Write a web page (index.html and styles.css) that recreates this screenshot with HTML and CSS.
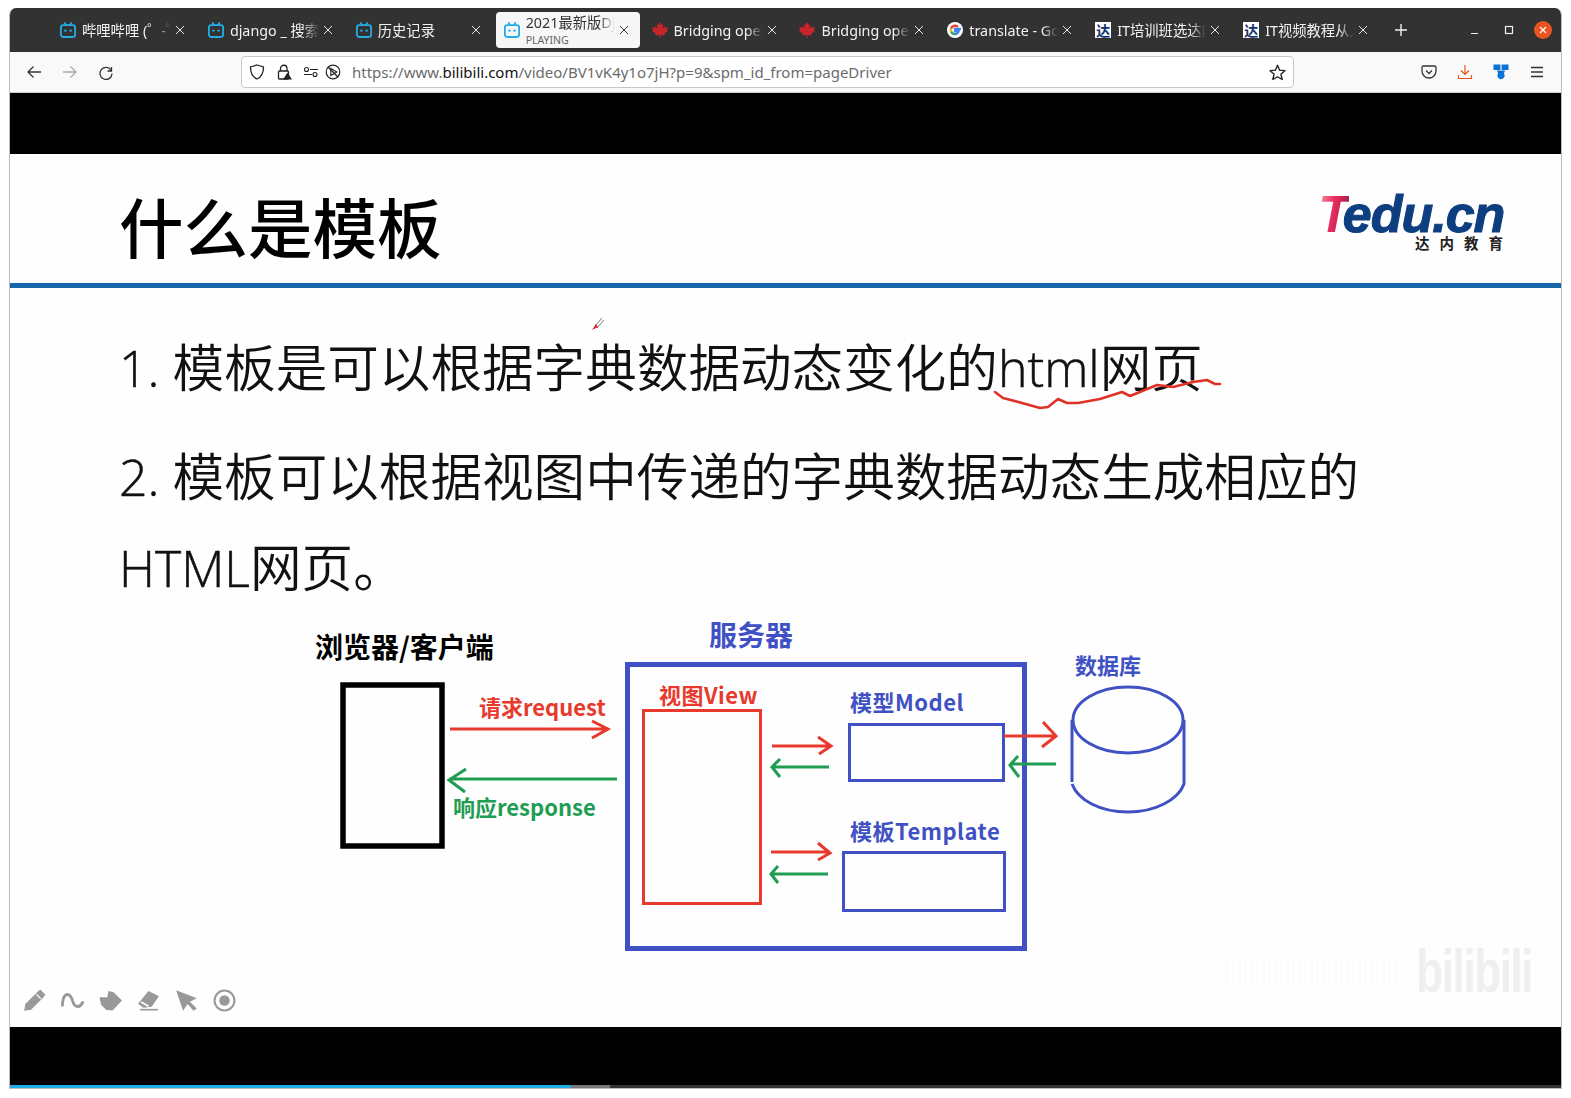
FILE: index.html
```html
<!DOCTYPE html>
<html lang="zh-CN">
<head>
    <meta charset="UTF-8">
    <title>2021最新版Django</title>
    <link rel="stylesheet" href="styles.css">
</head>
<body>
    <svg class="defs" width="0" height="0">
        <symbol id="bili" viewBox="0 0 16 16">
            <path d="M4.5 0.8 L6.5 3.2 M11.5 0.8 L9.5 3.2" stroke="#23ade5" stroke-width="1.6" stroke-linecap="round"/>
            <rect x="0.9" y="3.2" width="14.2" height="11.8" rx="2.4" fill="none" stroke="#23ade5" stroke-width="1.8"/>
            <circle cx="5.4" cy="8.6" r="1.2" fill="#23ade5"/>
            <circle cx="10.6" cy="8.6" r="1.2" fill="#23ade5"/>
        </symbol>
        <symbol id="leaf" viewBox="0 0 16 16">
            <path d="M8 0 L9.6 3 L11.2 2.2 L10.6 6.4 L12.6 4.2 L13.2 5.6 L15.8 5.2 L14.9 8 L16 8.8 L12.2 12 L12.7 13.4 L8.5 12.9 L8.5 16 L7.5 16 L7.5 12.9 L3.3 13.4 L3.8 12 L0 8.8 L1.1 8 L0.2 5.2 L2.8 5.6 L3.4 4.2 L5.4 6.4 L4.8 2.2 L6.4 3 Z" fill="#c8242b"/>
        </symbol>
        <symbol id="tclose" viewBox="0 0 10 10">
            <path d="M1 1 L9 9 M9 1 L1 9" stroke="#e8e8e8" stroke-width="1"/>
        </symbol>
    </svg>

    <div class="window">
        <div class="tabbar">
            <div class="tabs">
                <div class="tab">
                    <svg class="fav"><use href="#bili"/></svg>
                    <span class="tab-label">哔哩哔哩 (゜-゜)つロ 干杯</span>
                    <svg class="tab-x"><use href="#tclose"/></svg>
                </div>
                <div class="tab">
                    <svg class="fav"><use href="#bili"/></svg>
                    <span class="tab-label">django _ 搜索结果</span>
                    <svg class="tab-x"><use href="#tclose"/></svg>
                </div>
                <div class="tab">
                    <svg class="fav"><use href="#bili"/></svg>
                    <span class="tab-label">历史记录</span>
                    <svg class="tab-x"><use href="#tclose"/></svg>
                </div>
                <div class="tab tab-active">
                    <svg class="fav"><use href="#bili"/></svg>
                    <div class="tab-stack">
                        <span class="tab-label">2021最新版Django</span>
                        <span class="tab-sub">PLAYING</span>
                    </div>
                    <svg class="tab-x tab-x-dark" viewBox="0 0 10 10"><path d="M1 1 L9 9 M9 1 L1 9" stroke="#333" stroke-width="1"/></svg>
                </div>
                <div class="tab">
                    <svg class="fav"><use href="#leaf"/></svg>
                    <span class="tab-label">Bridging open source</span>
                    <svg class="tab-x"><use href="#tclose"/></svg>
                </div>
                <div class="tab">
                    <svg class="fav"><use href="#leaf"/></svg>
                    <span class="tab-label">Bridging open source</span>
                    <svg class="tab-x"><use href="#tclose"/></svg>
                </div>
                <div class="tab">
                    <svg class="fav" viewBox="0 0 16 16">
                        <circle cx="8" cy="8" r="8" fill="#fff"/>
                        <path d="M14 7 H8 V9.2 H11.6 C11 11 9.6 12.2 8 12.2" fill="none" stroke="#4285f4" stroke-width="2.4"/>
                        <path d="M8 12.2 C6.2 12.2 4.7 11.1 4 9.4" fill="none" stroke="#34a853" stroke-width="2.4"/>
                        <path d="M4 9.4 C3.7 8.5 3.7 7.5 4 6.6" fill="none" stroke="#fbbc05" stroke-width="2.4"/>
                        <path d="M4 6.6 C4.7 4.9 6.2 3.8 8 3.8 C9.1 3.8 10.1 4.2 10.9 4.9" fill="none" stroke="#ea4335" stroke-width="2.4"/>
                    </svg>
                    <span class="tab-label">translate - Google</span>
                    <svg class="tab-x"><use href="#tclose"/></svg>
                </div>
                <div class="tab">
                    <span class="fav-da">达</span>
                    <span class="tab-label">IT培训班选达内培训</span>
                    <svg class="tab-x"><use href="#tclose"/></svg>
                </div>
                <div class="tab">
                    <span class="fav-da">达</span>
                    <span class="tab-label">IT视频教程从入门到</span>
                    <svg class="tab-x"><use href="#tclose"/></svg>
                </div>
            </div>
            <svg class="newtab" viewBox="0 0 14 14"><path d="M7 1 V13 M1 7 H13" stroke="#f0f0f0" stroke-width="1.4"/></svg>
            <div class="winctl">
                <svg class="winbtn" viewBox="0 0 12 12"><path d="M2 9.5 H9" stroke="#eee" stroke-width="1.2"/></svg>
                <svg class="winbtn" viewBox="0 0 12 12"><rect x="2.5" y="2.5" width="7" height="7" fill="none" stroke="#eee" stroke-width="1.2"/></svg>
                <span class="winclose"><svg viewBox="0 0 10 10"><path d="M2 2 L8 8 M8 2 L2 8" stroke="#fff" stroke-width="1.2"/></svg></span>
            </div>
        </div>

        <div class="navbar">
            <svg class="navicon" viewBox="0 0 16 16"><path d="M15 8 H2 M7.5 2.5 L2 8 L7.5 13.5" fill="none" stroke="#333" stroke-width="1.3"/></svg>
            <svg class="navicon" viewBox="0 0 16 16"><path d="M1 8 H14 M8.5 2.5 L14 8 L8.5 13.5" fill="none" stroke="#aaa" stroke-width="1.3"/></svg>
            <svg class="navicon" viewBox="0 0 16 16"><path d="M13.5 3 V7 H9.5 M13.3 6.6 A6 6 0 1 0 14 9.5" fill="none" stroke="#333" stroke-width="1.3"/></svg>

            <div class="urlbar">
                <svg class="urlicon" viewBox="0 0 16 16"><path d="M8 1 L14.5 3 C14.5 9 13 12.8 8 15 C3 12.8 1.5 9 1.5 3 Z" fill="none" stroke="#222" stroke-width="1.3"/></svg>
                <svg class="urlicon" viewBox="0 0 16 16">
                    <path d="M4.5 7 V4.5 A3.2 3.2 0 0 1 11 4.5 V7" fill="none" stroke="#222" stroke-width="1.3"/>
                    <rect x="2.5" y="7" width="10" height="8" rx="1" fill="none" stroke="#222" stroke-width="1.3"/>
                    <path d="M11.5 8.5 L16 15.5 H7 Z" fill="#222"/>
                </svg>
                <svg class="urlicon urlicon-perm" viewBox="0 0 16 16">
                    <circle cx="3.5" cy="5.5" r="2" fill="none" stroke="#222" stroke-width="1.1"/>
                    <path d="M7 5.5 H15 M1 10.5 H9" stroke="#222" stroke-width="1.1"/>
                    <circle cx="12" cy="10.5" r="2" fill="none" stroke="#222" stroke-width="1.1"/>
                </svg>
                <svg class="urlicon urlicon-play" viewBox="0 0 16 16">
                    <circle cx="8" cy="8" r="6.8" fill="none" stroke="#222" stroke-width="1.2"/>
                    <path d="M5.8 4.5 L11.8 8 L5.8 11.5 Z" fill="none" stroke="#222" stroke-width="1.1"/>
                    <path d="M2.8 2.8 L13.2 13.2" stroke="#222" stroke-width="1.3"/>
                </svg>
                <span class="url">https://www.<b>bilibili.com</b>/video/BV1vK4y1o7jH?p=9&amp;spm_id_from=pageDriver</span>
                <svg class="urlstar" viewBox="0 0 16 16"><path d="M8 1.2 L10 5.8 L15 6.3 L11.2 9.6 L12.4 14.6 L8 12 L3.6 14.6 L4.8 9.6 L1 6.3 L6 5.8 Z" fill="none" stroke="#222" stroke-width="1.3" stroke-linejoin="round"/></svg>
            </div>

            <div class="navright">
                <svg class="navicon" viewBox="0 0 16 16"><path d="M2.5 2 H13.5 A1.5 1.5 0 0 1 15 3.5 V7 A7 7 0 0 1 1 7 V3.5 A1.5 1.5 0 0 1 2.5 2 Z" fill="none" stroke="#333" stroke-width="1.3"/><path d="M5 6.5 L8 9.5 L11 6.5" fill="none" stroke="#333" stroke-width="1.3"/></svg>
                <svg class="navicon" viewBox="0 0 16 16"><path d="M8 1 V10 M4 6.5 L8 10.5 L12 6.5 M1.5 11 V14.5 H14.5 V11" fill="none" stroke="#e8541e" stroke-width="1.2"/></svg>
                <svg class="navicon" viewBox="0 0 16 16"><path d="M0.5 0.5 H7.4 V6 H0.5 Z M8.6 0.5 H15.5 V6 H8.6 Z M4 6.6 H12 L10.9 9.6 A3.5 3.5 0 1 1 5.1 9.6 Z" fill="#0a72d4"/></svg>
                <svg class="navicon" viewBox="0 0 16 16"><path d="M2 3.5 H14 M2 8 H14 M2 12.5 H14" stroke="#333" stroke-width="1.3"/></svg>
            </div>
        </div>

        <div class="letterbox-top"></div>

        <div class="slide">
            <div class="slide-head">
                <h1 class="slide-title">什么是模板</h1>
                <div class="logo">
                    <div class="logo-mark"><span class="logo-t">T</span><span class="logo-edu">edu.cn</span></div>
                    <div class="logo-cn">达内教育</div>
                </div>
            </div>

            <div class="points">
                <p class="point point-first"><span class="num">1. </span>模板是可以根据字典数据动态变化的<span class="num">html</span>网页</p>
                <p class="point point-second"><span class="num">2. </span>模板可以根据视图中传递的字典数据动态生成相应的</p>
                <p class="point point-third"><span class="num">HTML</span>网页。</p>
            </div>

            <svg class="diagram" viewBox="300 610 900 350" width="900" height="350">
                <text class="lbl lbl-lg" x="315" y="658">浏览器/客户端</text>
                <rect class="box-black" x="343" y="685" width="99" height="161"/>

                <text class="lbl lbl-md red" x="479" y="716">请求request</text>
                <path class="arr red-s" d="M450 729 H608 M592 721 L608 729 L592 738"/>
                <path class="arr green-s" d="M617 779 H449 M466 769 L449 780 L465 792"/>
                <text class="lbl lbl-md green" x="453" y="816">响应response</text>

                <text class="lbl lbl-lg blue" x="709" y="646">服务器</text>
                <rect class="box-server" x="627.5" y="664.5" width="397" height="284"/>

                <text class="lbl lbl-md red lbl-wide" x="659" y="704">视图View</text>
                <rect class="box-thin red-s" x="643.5" y="710.5" width="117" height="193"/>

                <path class="arr red-s" d="M772 746 H831 M818 737 L831 746 L819 754"/>
                <path class="arr green-s" d="M829 767 H772 M780 759 L772 767 L780 777"/>
                <path class="arr red-s" d="M771 852 H830 M818 843 L830 853 L818 860"/>
                <path class="arr green-s" d="M828 874 H771 M778 866 L771 874 L778 883"/>

                <text class="lbl lbl-md blue lbl-wide" x="850" y="711">模型Model</text>
                <rect class="box-thin blue-s" x="849.5" y="724.5" width="154" height="56"/>

                <text class="lbl lbl-md blue lbl-wide" x="850" y="840">模板Template</text>
                <rect class="box-thin blue-s" x="843.5" y="852.5" width="161" height="58"/>

                <path class="arr red-s" d="M1004 736 H1056 M1043 722 L1056 736 L1042 747"/>
                <path class="arr green-s" d="M1056 764 H1011 M1018 756 L1010 765 L1019 777"/>

                <text class="lbl lbl-md blue" x="1075" y="674">数据库</text>
                <ellipse class="box-thin blue-s" cx="1128" cy="720" rx="55" ry="33"/>
                <path class="box-thin blue-s" d="M1072 720 V782 M1184 720 V784 C1178 800 1155 812 1128 812 C1100 812 1078 800 1072 784"/>
            </svg>

            <svg class="ink" viewBox="0 0 1551 873">
                <path d="M985 238 L993 244 L1012 249 L1030 254 L1038 253 L1048 245 L1057 249 L1068 249 L1090 245 L1112 238 L1120 242 L1147 231 L1163 233 L1183 228 L1197 226 L1205 230 L1210 230" fill="none" stroke="#e03127" stroke-width="2.6" stroke-linejoin="round" stroke-linecap="round"/>
                <path d="M585 172 L592 164 M587 174 L594 166" stroke="#777" stroke-width="1"/>
                <path d="M586 170 L588 173 L582 176 Z" fill="#d8232a"/>
            </svg>

            <div class="draw-tools">
                <svg class="tool" viewBox="0 0 20 20"><path d="M1 19 L2 13 L12 3 L15 0.5 L19.5 5 L17 8 L7 18 Z" fill="#999"/><path d="M11.5 4.5 L15.5 8.5" stroke="#fff" stroke-width="1"/></svg>
                <svg class="tool" viewBox="0 0 24 20"><path d="M1.5 15 C2 1 9 1 12 10 C14 18 20 18 22.5 12" fill="none" stroke="#999" stroke-width="3" stroke-linecap="round"/></svg>
                <svg class="tool" viewBox="0 0 22 20"><path d="M0.5 7 L8 7 L9 1 L14 2 L22 10 L13 19.5 L7 19 L2 14 Z" fill="#999"/></svg>
                <svg class="tool" viewBox="0 0 22 20"><path d="M1 13 L11 1 L21 6 L14 16 L6 17 Z" fill="#999"/><path d="M4 11.5 L11 15.5" stroke="#fff" stroke-width="1.6"/><path d="M3 18.8 H20" stroke="#999" stroke-width="1.6"/></svg>
                <svg class="tool" viewBox="0 0 20 20"><path d="M1 1 L19 8 L13 11 L19 17 L16 19 L11 13 L7 19 Z" fill="#999"/></svg>
                <svg class="tool" viewBox="0 0 22 22"><circle cx="11" cy="11" r="9.5" fill="none" stroke="#999" stroke-width="2"/><circle cx="11" cy="11" r="5" fill="#999"/></svg>
            </div>

            <div class="watermark">
                <span class="wm-smudge"></span>
                <span class="wm-logo">bilibili</span>
            </div>
        </div>

        <div class="letterbox-bottom"></div>
        <div class="progress">
            <div class="progress-played"></div>
            <div class="progress-buffer"></div>
        </div>
    </div>
</body>
</html>
```

FILE: styles.css
```css
* {
    box-sizing: border-box;
}
html, body {
    height: 100%;
}
body {
    margin: 0;
    padding: 8px 9px 9px;
    background: #fff;
    font-family: "Noto Sans", "Noto Sans CJK SC", sans-serif;
}
.defs {
    position: absolute;
}
.window {
    display: flex;
    flex-direction: column;
    height: 1081px;
    border: 1px solid #bcbcbc;
    border-top: none;
    border-radius: 7px 7px 0 0;
    overflow: hidden;
}

/* tab strip */
.tabbar {
    display: flex;
    align-items: center;
    height: 44px;
    padding-left: 42px;
    background: #333232;
    color: #f2f2f2;
    flex-shrink: 0;
}
.tabs {
    display: flex;
    gap: 3.9px;
}
.tab {
    display: flex;
    align-items: center;
    width: 144px;
    height: 36px;
    padding: 0 11px 0 8px;
    font-size: 14.3px;
    border-radius: 4px;
}
.tab-active {
    background: #f7f7f7;
    color: #333;
}
.fav {
    width: 16px;
    height: 16px;
    margin-right: 6px;
    flex-shrink: 0;
}
.fav-da {
    width: 16px;
    height: 16px;
    margin-right: 6px;
    flex-shrink: 0;
    background: #fff;
    color: #12306b;
    font: bold 14px/16px "Noto Sans CJK SC", sans-serif;
    text-align: center;
}
.tab-label {
    flex: 1;
    min-width: 0;
    padding-top: 2px;
    white-space: nowrap;
    overflow: hidden;
    line-height: 18px;
    -webkit-mask-image: linear-gradient(to right, #000 82%, transparent 100%);
    mask-image: linear-gradient(to right, #000 82%, transparent 100%);
}
.tab-stack {
    display: flex;
    flex-direction: column;
    flex: 1;
    min-width: 0;
}
.tab-stack .tab-label {
    flex: none;
    padding-top: 0;
}
.tab-sub {
    margin-top: 2px;
    font-size: 10.5px;
    line-height: 13px;
    color: #666;
}
.tab-x {
    width: 10px;
    height: 10px;
    margin-left: 4px;
    flex-shrink: 0;
}
.newtab {
    width: 14px;
    height: 14px;
    margin-left: 15px;
}
.winctl {
    display: flex;
    align-items: center;
    margin-left: auto;
    padding-right: 9px;
    gap: 22px;
}
.winbtn {
    width: 12px;
    height: 12px;
}
.winclose {
    display: flex;
    align-items: center;
    justify-content: center;
    width: 18px;
    height: 18px;
    margin-left: -3px;
    border-radius: 50%;
    background: #e95420;
}
.winclose svg {
    width: 10px;
    height: 10px;
}

/* toolbar */
.navbar {
    display: flex;
    align-items: center;
    height: 41px;
    padding: 0 16px;
    gap: 20px;
    background: #f9f9fa;
    border-bottom: 1px solid #d4d4d4;
    flex-shrink: 0;
}
.navicon {
    width: 16px;
    height: 16px;
    flex-shrink: 0;
}
.urlbar {
    display: flex;
    align-items: center;
    flex-shrink: 0;
    width: 1053px;
    height: 32px;
    margin-left: 107px;
    padding: 0 7px;
    background: #fff;
    border: 1px solid #c8c8c8;
    border-radius: 4px;
    gap: 11px;
}
.urlicon {
    width: 16px;
    height: 16px;
    flex-shrink: 0;
}
.urlicon-perm {
    margin-right: -5px;
}
.url {
    flex: 1;
    font-size: 15px;
    color: #6b6b6b;
    white-space: nowrap;
}
.url b {
    font-weight: 400;
    color: #111;
}
.urlstar {
    width: 17px;
    height: 17px;
}
.navright {
    display: flex;
    gap: 20px;
    margin-left: auto;
}

.letterbox-top {
    height: 61px;
    background: #000;
    flex-shrink: 0;
}
.letterbox-bottom {
    height: 58px;
    background: #000;
    flex-shrink: 0;
}

/* slide */
.slide {
    position: relative;
    height: 873px;
    background: #fefefe;
    flex-shrink: 0;
    color: #111;
    font-family: "Noto Sans CJK SC", sans-serif;
}
.slide-head {
    display: flex;
    justify-content: space-between;
    align-items: flex-start;
    height: 134px;
    padding: 0 61px 0 109px;
    border-bottom: 5px solid #1565a8;
}
.slide-title {
    margin: 25px 0 0;
    font-size: 64.5px;
    line-height: 92px;
    font-weight: 500;
    letter-spacing: 0;
    color: #000;
}
.logo {
    margin-top: 38px;
    width: 182px;
}
.logo-mark {
    height: 44px;
    font: italic bold 52px/44px "Liberation Sans", sans-serif;
    letter-spacing: -1px;
    white-space: nowrap;
    -webkit-text-stroke: 1.1px #0d3f80;
}
.logo-t {
    background: linear-gradient(100deg, #f7a3b4 0%, #e8305f 45%, #c81e50 70%, #2c3f80 100%);
    -webkit-background-clip: text;
    background-clip: text;
    color: transparent;
    -webkit-text-stroke: 0;
}
.logo-edu {
    color: #0d3f80;
    margin-left: -6px;
}
.logo-cn {
    margin-top: -2px;
    padding-left: 97px;
    font-size: 14.5px;
    line-height: 18px;
    font-weight: 700;
    letter-spacing: 10px;
    color: #222;
    white-space: nowrap;
}
.points {
    height: 322px;
    padding-left: 109px;
    font-size: 51.6px;
    font-weight: 350;
    white-space: nowrap;
    color: #111;
}
.point {
    margin: 0;
    line-height: 74px;
}
.point-first {
    padding-top: 40px;
    height: 117px;
}
.point-second {
    margin-top: -1px;
    padding-top: 33px;
    height: 107px;
}
.point-third {
    padding-top: 17px;
}
.num {
    font-family: "Open Sans", sans-serif;
    font-size: 50px;
    font-weight: 300;
    -webkit-text-stroke: 0.5px #111;
}
.diagram {
    display: block;
    margin-left: 289.5px;
}
.lbl {
    font-family: "Noto Sans CJK SC", sans-serif;
    font-weight: 700;
}
.lbl-lg {
    font-size: 28px;
}
.lbl-md {
    font-size: 22px;
}
.lbl-wide {
    letter-spacing: 0.5px;
}
.red {
    fill: #e8392d;
}
.green {
    fill: #1f9d52;
}
.blue {
    fill: #3f51c4;
}
.box-black {
    fill: none;
    stroke: #000;
    stroke-width: 5.5;
}
.box-server {
    fill: none;
    stroke: #3f51c4;
    stroke-width: 5;
}
.box-thin {
    fill: none;
    stroke-width: 3;
}
.arr {
    fill: none;
    stroke-width: 3;
}
.red-s {
    stroke: #e8392d;
}
.green-s {
    stroke: #1f9d52;
}
.blue-s {
    stroke: #3f51c4;
}

/* overlays on the video */
.ink {
    position: absolute;
    top: 0;
    left: 0;
    width: 100%;
    height: 100%;
    pointer-events: none;
}
.draw-tools {
    position: absolute;
    left: 13px;
    top: 835px;
    display: flex;
    align-items: center;
    gap: 15px;
}
.tool {
    width: 23px;
    height: 23px;
}
.watermark {
    position: absolute;
    right: 29px;
    top: 786px;
    display: flex;
    align-items: center;
}
.wm-smudge {
    width: 175px;
    height: 26px;
    margin-right: -32px;
    background: repeating-linear-gradient(90deg, #fcfcfc 0 3px, #fff 3px 6px);
}
.wm-logo {
    font: bold 62px/62px "Liberation Sans", sans-serif;
    letter-spacing: -2px;
    color: #efefef;
    transform: scaleX(0.71);
    transform-origin: right center;
}

.progress {
    display: flex;
    height: 3px;
    background: #333;
    flex-shrink: 0;
}
.progress-played {
    width: 561px;
    background: #23ade5;
}
.progress-buffer {
    width: 39px;
    background: #777;
}
```
